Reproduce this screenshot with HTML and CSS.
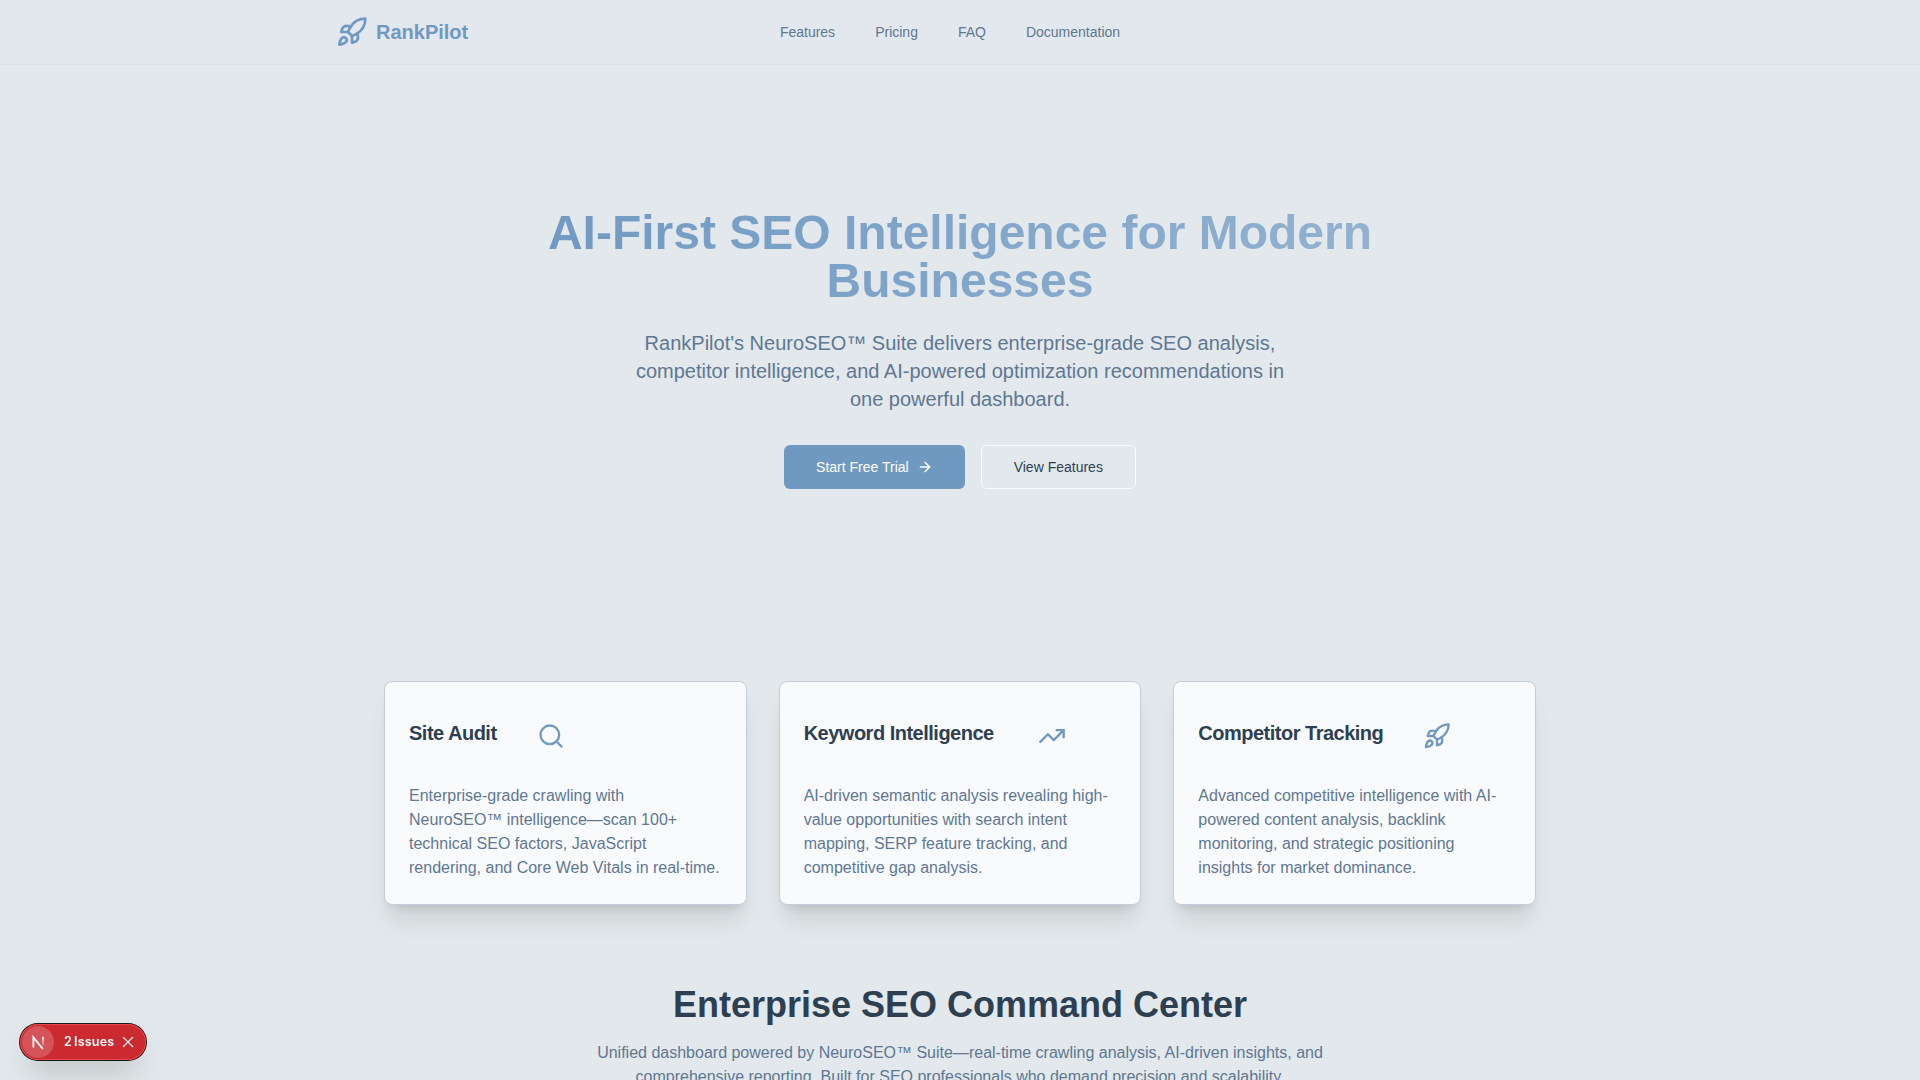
FILE: index.html
```html
<!DOCTYPE html>
<html lang="en">
<head>
<meta charset="utf-8">
<title>RankPilot</title>
<link rel="stylesheet" href="styles.css">
</head>
<body>
<svg class="defs" aria-hidden="true">
  <symbol id="rocket" viewBox="0 0 24 24">
    <path d="M4.5 16.5c-1.5 1.26-2 5-2 5s3.74-.5 5-2c.71-.84.7-2.13-.09-2.91a2.18 2.18 0 0 0-2.91-.09z"/>
    <path d="m12 15-3-3a22 22 0 0 1 2-3.95A12.88 12.88 0 0 1 22 2c0 2.72-.78 7.5-6 11a22.35 22.35 0 0 1-4 2z"/>
    <path d="M9 12H4s.55-3.03 2-4c1.62-1.08 5 0 5 0"/>
    <path d="M12 15v5s3.03-.55 4-2c1.08-1.62 0-5 0-5"/>
  </symbol>
</svg>
<header class="topbar">
  <div class="topbar-inner">
    <a class="brand"><svg class="icon brand-icon"><use href="#rocket"/></svg><span>RankPilot</span></a>
    <nav class="nav"><a>Features</a><a>Pricing</a><a>FAQ</a><a>Documentation</a></nav>
  </div>
</header>
<main>
  <section class="hero">
    <h1 class="hero-title">AI-First SEO Intelligence for Modern Businesses</h1>
    <p class="hero-text">RankPilot's NeuroSEO™ Suite delivers enterprise-grade SEO analysis, competitor intelligence, and AI-powered optimization recommendations in one powerful dashboard.</p>
    <div class="actions">
      <a class="btn btn-primary">Start Free Trial<svg class="icon btn-icon" viewBox="0 0 24 24"><path d="M5 12h14"/><path d="m12 5 7 7-7 7"/></svg></a>
      <a class="btn btn-outline">View Features</a>
    </div>
  </section>
  <section class="cards">
    <article class="card">
      <div class="card-head"><h3>Site Audit</h3><svg class="icon card-icon" viewBox="0 0 24 24"><circle cx="11" cy="11" r="8"/><path d="m21 21-4.3-4.3"/></svg></div>
      <p>Enterprise-grade crawling with NeuroSEO™ intelligence—scan 100+ technical SEO factors, JavaScript rendering, and Core Web Vitals in real-time.</p>
    </article>
    <article class="card">
      <div class="card-head card-head-wide"><h3>Keyword Intelligence</h3><svg class="icon card-icon" viewBox="0 0 24 24"><path d="M22 7l-8.5 8.5-5-5L2 17"/><path d="M16 7h6v6"/></svg></div>
      <p>AI-driven semantic analysis revealing high-value opportunities with search intent mapping, SERP feature tracking, and competitive gap analysis.</p>
    </article>
    <article class="card">
      <div class="card-head"><h3>Competitor Tracking</h3><svg class="icon card-icon"><use href="#rocket"/></svg></div>
      <p>Advanced competitive intelligence with AI-powered content analysis, backlink monitoring, and strategic positioning insights for market dominance.</p>
    </article>
  </section>
  <section class="command">
    <h2>Enterprise SEO Command Center</h2>
    <p>Unified dashboard powered by NeuroSEO™ Suite—real-time crawling analysis, AI-driven insights, and comprehensive reporting. Built for SEO professionals who demand precision and scalability.</p>
  </section>
</main>
<div class="issues">
  <span class="issues-mark"><svg viewBox="0 0 32 32" fill="none"><defs><linearGradient id="fade" x1="0" y1="12" x2="0" y2="21" gradientUnits="userSpaceOnUse"><stop stop-color="#fff"/><stop offset="1" stop-color="#fff" stop-opacity="0"/></linearGradient></defs><path d="M11.4 21.6V11.4L20.8 23" stroke="#fff" stroke-width="1.8"/><path d="M21 10.8v10" stroke="url(#fade)" stroke-width="1.6"/></svg></span>
  <span class="issues-text"><span>2</span><span>Issues</span></span>
  <svg class="issues-close" viewBox="0 0 12 12"><path d="M2 2l8 8M10 2l-8 8"/></svg>
</div>
</body>
</html>
```
FILE: styles.css
```css
* { box-sizing: border-box; margin: 0; padding: 0; }
html, body { height: 1080px; overflow: hidden; }
body {
  background: #e2e8eb;
  color: #2e3f52;
  font-family: "Liberation Sans", Arial, sans-serif;
  font-size: 16px;
  line-height: 24px;
}
.defs { position: absolute; width: 0; height: 0; }
.icon { flex: none; fill: none; stroke: currentColor; stroke-width: 2; stroke-linecap: round; stroke-linejoin: round; }

.topbar { height: 65px; background: #e3e7ee; border-bottom: 1px solid #dae1e5; }
.topbar-inner { display: grid; grid-template-columns: 1fr auto 1fr; align-items: center; width: 1248px; height: 64px; margin: 0 auto; }
.brand { display: flex; align-items: center; gap: 8px; color: #7099c2; font-size: 20px; font-weight: 700; line-height: 28px; }
.brand-icon { width: 32px; height: 32px; }
.nav { display: flex; gap: 40px; margin-right: 20px; color: #5f7891; font-size: 14px; line-height: 20px; }

.hero { display: flex; flex-direction: column; align-items: center; padding: 144px 0 192px; text-align: center; }
.hero-title {
  width: 896px;
  font-size: 48px;
  line-height: 48px;
  background: linear-gradient(to right, #7099c2, #94b2d1);
  -webkit-background-clip: text;
  background-clip: text;
  color: transparent;
}
.hero-text { width: 672px; margin-top: 24px; color: #5f7793; font-size: 20px; line-height: 28px; }
.actions { display: flex; gap: 16px; margin-top: 32px; }
.btn { display: flex; align-items: center; gap: 8px; height: 44px; padding: 0 32px; border-radius: 6px; font-size: 14px; line-height: 20px; }
.btn-primary { background: #7099c2; color: #fff; }
.btn-icon { width: 16px; height: 16px; }
.btn-outline { border: 1px solid #f9fafc; }

.cards { display: grid; grid-template-columns: repeat(3, 1fr); gap: 32px; width: 1152px; margin: 0 auto; }
.card {
  padding: 24px;
  background: #f9fafc;
  border: 1px solid #c1ced9;
  border-radius: 8px;
  box-shadow: 0 20px 25px -5px rgba(0, 0, 0, .1), 0 8px 10px -6px rgba(0, 0, 0, .1);
}
.card-head { display: flex; gap: 40px; height: 78px; padding-top: 13px; }
.card-head-wide { gap: 44px; }
.card h3 { font-size: 20px; line-height: 28px; letter-spacing: -.5px; }
.card-icon { width: 28px; height: 28px; margin-top: 3px; color: #7099c2; }
.card p { color: #5f7793; }

.command { display: flex; flex-direction: column; align-items: center; padding-top: 80px; text-align: center; }
.command h2 { font-size: 36px; line-height: 40px; }
.command p { width: 768px; margin-top: 16px; color: #5f7793; }

.issues {
  position: fixed; left: 20px; bottom: 20px;
  display: flex; align-items: center;
  width: 126px; height: 36px; padding: 2px;
  border-radius: 18px;
  background: #ca2a30;
  color: #fff;
  box-shadow: 0 0 0 1px #171717, inset 0 0 0 1px #e5484d, 0 16px 32px -8px rgba(0, 0, 0, .24);
}
.issues-mark { width: 32px; height: 32px; border-radius: 50%; background: rgba(255, 255, 255, .2); }
.issues-mark svg { display: block; width: 32px; height: 32px; }
.issues-text { display: flex; gap: 2px; width: 49px; margin-left: 10px; font: 600 12.5px/16px Inter, sans-serif; letter-spacing: .2px; white-space: nowrap; }
.issues-close { width: 14px; height: 14px; margin-left: 8px; stroke: #fff; stroke-width: 1.1; stroke-linecap: round; }
```
